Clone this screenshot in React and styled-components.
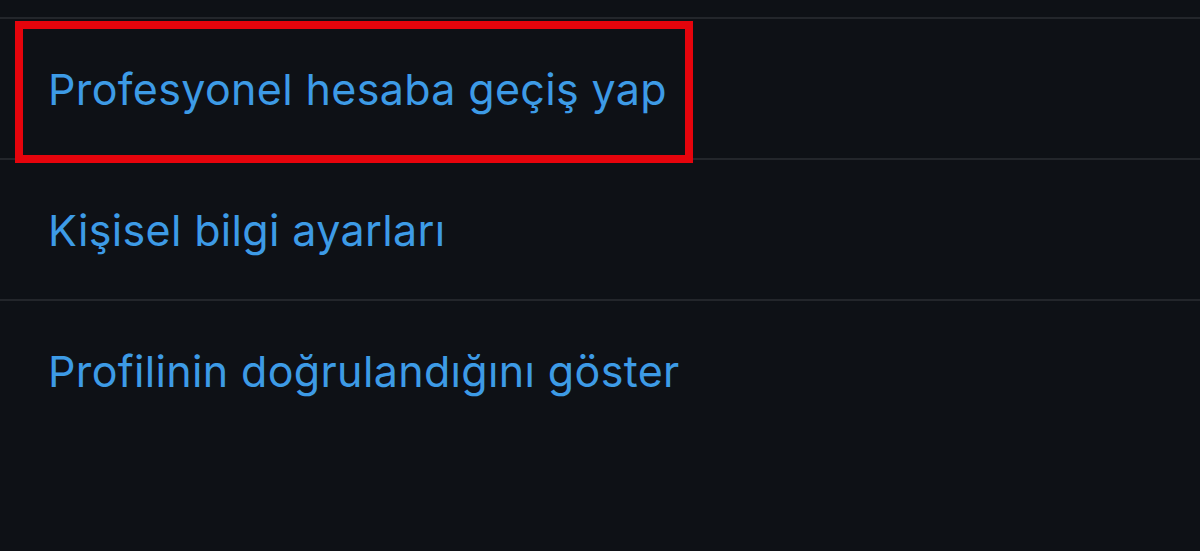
import styled, { createGlobalStyle } from "styled-components";

const GlobalStyle = createGlobalStyle`
    html, body {
        margin: 0;
        padding: 0;
        background-color: #0e1116;
    }
    body {
        font-family: Inter, "Noto Sans", "Liberation Sans", sans-serif;
    }
`;

const Page = styled.main`
    width: 1200px;
    height: 551px;
    overflow: hidden;
    background-color: #0e1116;
    padding-top: 17px;
    box-sizing: border-box;
`;

const List = styled.ul`
    list-style: none;
    margin: 0;
    padding: 0;
`;

const Row = styled.li`
    position: relative;
    height: 139px;
    border-top: 2px solid #23262b;
    display: flex;
    align-items: center;
    padding-left: 48px;
`;

const Label = styled.span`
    color: #3d9be6;
    font-size: 43px;
    font-weight: 400;
    letter-spacing: 0.35px;
`;

// red annotation box drawn over the first row
const Highlight = styled.span`
    position: absolute;
    z-index: 1;
    top: 2px;
    left: 15px;
    width: 678px;
    height: 142px;
    box-sizing: border-box;
    border: 8px solid #e5040c;
    pointer-events: none;
`;

const items = [
    { id: 1, title: "Profesyonel hesaba geçiş yap", marked: true },
    { id: 2, title: "Kişisel bilgi ayarları" },
    { id: 3, title: "Profilinin doğrulandığını göster" },
];

const App = () => {
    return (
        <Page>
            <GlobalStyle />
            <List>
                {items.map((item) => (
                    <Row key={item.id}>
                        <Label>{item.title}</Label>
                        {item.marked && <Highlight />}
                    </Row>
                ))}
            </List>
        </Page>
    );
};

export default App;
